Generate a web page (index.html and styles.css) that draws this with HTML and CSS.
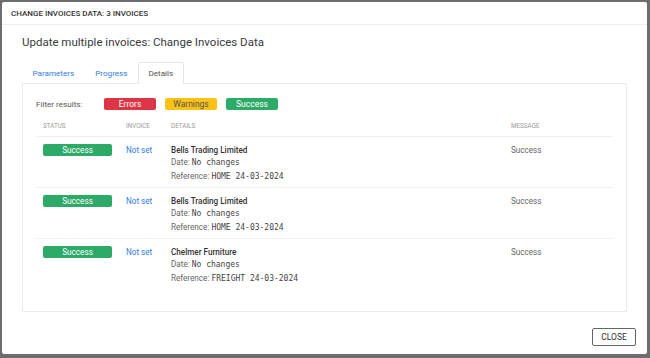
FILE: index.html
```html
<!DOCTYPE html>
<html>
<head>
<meta charset="utf-8">
<link rel="stylesheet" href="styles.css">
</head>
<body>
<div class="modal">
  <div class="modal-header">CHANGE INVOICES DATA: 3 INVOICES</div>
  <div class="modal-body">
    <h1 class="title">Update multiple invoices: Change Invoices Data</h1>
    <div class="tabs">
      <span class="tab">Parameters</span>
      <span class="tab">Progress</span>
      <span class="tab active">Details</span>
    </div>
    <div class="panel">
      <div class="filter">
        <span class="filter-label">Filter results:</span>
        <span class="fbadge red">Errors</span>
        <span class="fbadge yellow">Warnings</span>
        <span class="fbadge green">Success</span>
      </div>
      <table class="results">
        <thead>
          <tr><th class="c-status">STATUS</th><th class="c-inv">INVOICE</th><th class="c-det">DETAILS</th><th class="c-msg">MESSAGE</th></tr>
        </thead>
        <tbody>
          <tr>
            <td><span class="sbadge">Success</span></td>
            <td><a class="link">Not set</a></td>
            <td><div class="name">Bells Trading Limited</div><div>Date: <span class="mono">No changes</span></div><div>Reference: <span class="mono">HOME 24-03-2024</span></div></td>
            <td>Success</td>
          </tr>
          <tr>
            <td><span class="sbadge">Success</span></td>
            <td><a class="link">Not set</a></td>
            <td><div class="name">Bells Trading Limited</div><div>Date: <span class="mono">No changes</span></div><div>Reference: <span class="mono">HOME 24-03-2024</span></div></td>
            <td>Success</td>
          </tr>
          <tr>
            <td><span class="sbadge">Success</span></td>
            <td><a class="link">Not set</a></td>
            <td><div class="name">Chelmer Furniture</div><div>Date: <span class="mono">No changes</span></div><div>Reference: <span class="mono">FREIGHT 24-03-2024</span></div></td>
            <td>Success</td>
          </tr>
        </tbody>
      </table>
    </div>
  </div>
  <div class="modal-footer"><button class="close">CLOSE</button></div>
</div>
</body>
</html>
```
FILE: styles.css
```css
html, body { margin: 0; padding: 0; }
body {
  background: #6d6d6d;
  font-family: Roboto, "Liberation Sans", sans-serif;
  padding: 2px 0 0 2px;
  height: 358px;
  box-sizing: border-box;
  overflow: hidden;
}
.modal {
  width: 645px;
  height: 352px;
  background: #fff;
  border-radius: 2px;
  display: flex;
  flex-direction: column;
  box-sizing: border-box;
}
.modal-header {
  height: 22px;
  line-height: 23px;
  padding-left: 9px;
  font-size: 8px;
  font-weight: 500;
  color: #333;
  border-bottom: 1px solid #eeeeee;
}
.modal-body {
  padding: 0 20px;
  flex: 0 0 auto;
}
.title {
  margin: 0;
  font-size: 11.5px;
  font-weight: 400;
  color: #3a3a40;
  height: 37px;
  line-height: 35px;
}
.tabs {
  display: flex;
  height: 21px;
  align-items: stretch;
}
.tab {
  font-size: 8.1px;
  color: #2f80e0;
  padding: 0 9.5px;
  line-height: 21px;
  border: 1px solid transparent;
  border-bottom: none;
  border-radius: 2px 2px 0 0;
}
.tab.active {
  color: #555;
  border-color: #e6e6e6;
  background: #fff;
  margin-bottom: -1px;
  position: relative;
}
.panel {
  border: 1px solid #ececec;
  height: 229px;
  box-sizing: border-box;
  padding: 8px 13px 0 13px;
}
.filter {
  display: flex;
  align-items: center;
  height: 24px;
  font-size: 8.1px;
  color: #555;
}
.filter-label { width: 68px; }
.fbadge {
  width: 52px;
  height: 12px;
  line-height: 12px;
  text-align: center;
  border-radius: 2px;
  font-size: 8.5px;
  margin-right: 9px;
}
.red { background: #dc3545; color: #fff; }
.yellow { background: #fdc117; color: #555; }
.green { background: #2daa68; color: #fff; }
.results {
  width: 100%;
  border-collapse: collapse;
  font-size: 8.15px;
  color: #666;
}
.results th {
  text-align: left;
  font-weight: 400;
  font-size: 6.3px;
  color: #9a9a9a;
  height: 20px;
  padding: 0 0 0 7px;
  border-bottom: 1px solid #efefef;
}
.c-status { width: 76px; }
.c-inv { width: 38px; }
.c-msg { width: 102px; }
.results td {
  vertical-align: top;
  padding: 7px 0 0 7px;
  height: 43px;
  line-height: 12.4px;
  border-bottom: 1px solid #efefef;
}
.results tbody tr:last-child td { border-bottom: none; }
.sbadge {
  display: block;
  width: 69px;
  height: 12px;
  line-height: 12px;
  text-align: center;
  background: #2daa68;
  color: #fff;
  border-radius: 2px;
  font-size: 8.2px;
}
.link { color: #2f80e0; }
.name { font-weight: 500; color: #333; }
.mono { font-family: "DejaVu Sans Mono", monospace; font-size: 8px; color: #444; }
.modal-footer {
  flex: 1;
  display: flex;
  justify-content: flex-end;
  align-items: center;
  padding-right: 11px;
  padding-top: 8px;
}
.close {
  width: 44px;
  height: 18px;
  background: #fff;
  border: 1px solid #666;
  border-radius: 2px;
  font-family: Roboto, sans-serif;
  font-size: 8.5px;
  color: #333;
  padding: 0;
}
```
